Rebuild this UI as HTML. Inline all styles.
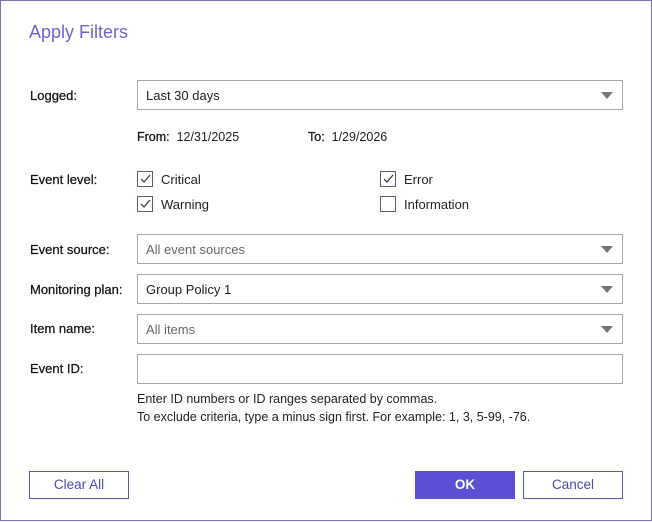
<!DOCTYPE html>
<html><head><meta charset="utf-8"><style>
*{margin:0;padding:0;box-sizing:border-box}
body{width:652px;height:522px;background:#fff;font-family:"Liberation Sans",sans-serif;font-size:13px;color:#222;position:relative;overflow:hidden}
.frame{position:absolute;left:0;top:0;width:652px;height:521px;border:1px solid #7a72b0}
.a{position:absolute;white-space:nowrap}
.lbl{color:#111;font-size:13px;-webkit-text-stroke:0.25px #111}
.box{position:absolute;left:137px;width:486px;height:30px;border:1px solid #a8a8a8;background:#fff}
.box span{position:absolute;left:8px;top:7px}
.arr{position:absolute;right:9px;top:11px;width:0;height:0;border-left:6px solid transparent;border-right:6px solid transparent;border-top:7px solid #777}
.cb{position:absolute;width:16px;height:16px;border:1px solid #5a5a78;background:#fff}
.cb svg{position:absolute;left:1px;top:1px}
.btn{position:absolute;top:471px;width:100px;height:28px;border:1px solid #5a5a9a;text-align:center;line-height:26px;color:#4b4ba8;font-size:13.5px;background:#fff}
</style></head><body>
<div class="frame"></div>
<div class="a" style="left:29px;top:22px;font-size:18px;color:#7262d0">Apply Filters</div>

<div class="a lbl" style="left:30px;top:88px">Logged:</div>
<div class="box" style="top:80px"><span style="color:#222">Last 30 days</span><div class="arr"></div></div>

<div class="a" style="left:137px;top:130px;font-size:12.5px"><b style="font-weight:normal;color:#111;-webkit-text-stroke:0.25px #111">From:</b>&nbsp; 12/31/2025</div>
<div class="a" style="left:308px;top:130px;font-size:12.5px"><span style="-webkit-text-stroke:0.25px #111">To:</span>&nbsp; 1/29/2026</div>

<div class="a lbl" style="left:30px;top:172px">Event level:</div>
<div class="cb" style="left:137px;top:171px"><svg width="12" height="12"><path d="M2 6 L5 9 L11 2" stroke="#333" stroke-width="1.2" fill="none"/></svg></div>
<div class="a" style="left:161px;top:172px">Critical</div>
<div class="cb" style="left:137px;top:196px"><svg width="12" height="12"><path d="M2 6 L5 9 L11 2" stroke="#333" stroke-width="1.2" fill="none"/></svg></div>
<div class="a" style="left:161px;top:197px">Warning</div>
<div class="cb" style="left:380px;top:171px"><svg width="12" height="12"><path d="M2 6 L5 9 L11 2" stroke="#333" stroke-width="1.2" fill="none"/></svg></div>
<div class="a" style="left:404px;top:172px">Error</div>
<div class="cb" style="left:380px;top:196px"></div>
<div class="a" style="left:404px;top:197px">Information</div>

<div class="a lbl" style="left:30px;top:242px">Event source:</div>
<div class="box" style="top:234px"><span style="color:#666">All event sources</span><div class="arr"></div></div>
<div class="a lbl" style="left:30px;top:282px">Monitoring plan:</div>
<div class="box" style="top:274px"><span>Group Policy 1</span><div class="arr"></div></div>
<div class="a lbl" style="left:30px;top:321px">Item name:</div>
<div class="box" style="top:314px"><span style="color:#666">All items</span><div class="arr"></div></div>
<div class="a lbl" style="left:30px;top:361px">Event ID:</div>
<div class="box" style="top:354px"></div>

<div class="a" style="left:137px;top:392px;font-size:12.5px">Enter ID numbers or ID ranges separated by commas.</div>
<div class="a" style="left:137px;top:410px;font-size:12.5px">To exclude criteria, type a minus sign first. For example: 1, 3, 5-99, -76.</div>

<div class="btn" style="left:29px">Clear All</div>
<div class="btn" style="left:415px;background:#5b50d6;border-color:#5b50d6;color:#fff;font-weight:bold">OK</div>
<div class="btn" style="left:523px">Cancel</div>
</body></html>
